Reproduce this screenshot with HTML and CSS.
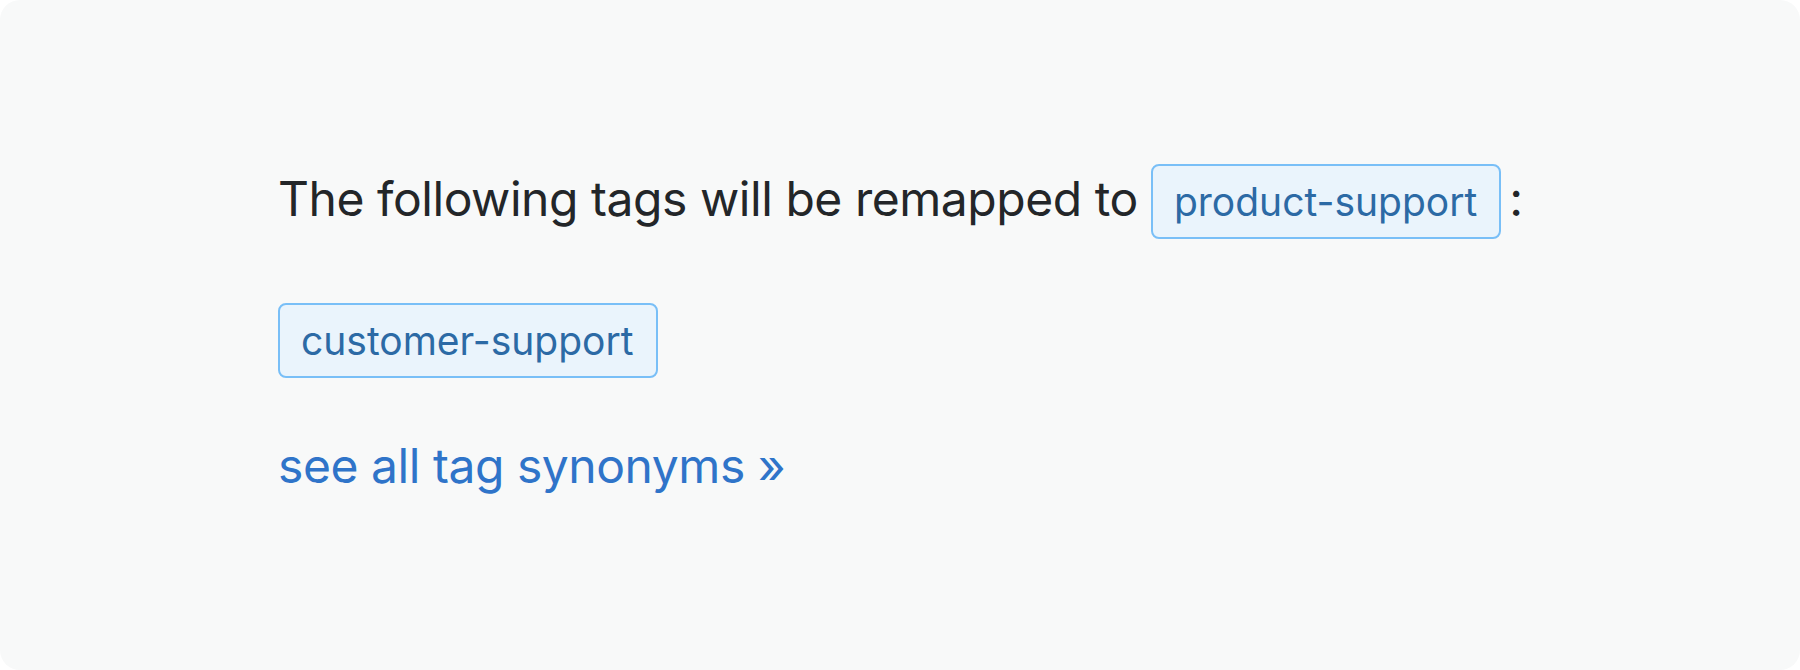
FILE: index.html
```html
<!DOCTYPE html>
<html lang="en">
<head>
    <meta charset="UTF-8">
    <meta name="viewport" content="width=device-width, initial-scale=1.0">
    <title>Tag synonyms</title>
    <link rel="stylesheet" href="styles.css">
</head>
<body>
    <div class="panel">
        <p class="remap-line">The following tags will be remapped to <a href="#" class="post-tag">product-support</a>:</p>
        <div class="tag-list">
            <a href="#" class="post-tag">customer-support</a>
        </div>
        <p class="synonyms"><a href="#" class="synonyms-link">see all tag synonyms »</a></p>
    </div>
</body>
</html>
```

FILE: styles.css
```css
body {
    margin: 0;
    background-color: #fff;
    font-family: Inter, "Noto Sans", sans-serif;
}

.panel {
    height: 670px;
    box-sizing: border-box;
    padding: 164px 0 0 278px;
    background-color: #f8f9f9;
    border-radius: 20px;
}

.remap-line {
    margin: 0;
    font-size: 48px;
    line-height: 1.2;
    letter-spacing: -0.45px;
    color: #232629;
}

.post-tag {
    display: inline-block;
    padding: 16px 22px 16px 21px;
    margin: 0 8px 0 0;
    font-size: 39px;
    line-height: 1;
    letter-spacing: 0;
    color: #2c6aa5;
    text-decoration: none;
    background-color: #eaf4fc;
    border: 2px solid #79bff7;
    border-radius: 8px;
}

.tag-list {
    margin-top: 64px;
    font-size: 36px;
    line-height: 1;
}

.tag-list .post-tag {
    margin: 0;
}

.synonyms {
    margin: 59px 0 0;
    font-size: 48px;
    line-height: 1.2;
    letter-spacing: -0.45px;
}

.synonyms-link {
    color: #2f74c9;
    text-decoration: none;
}
```
